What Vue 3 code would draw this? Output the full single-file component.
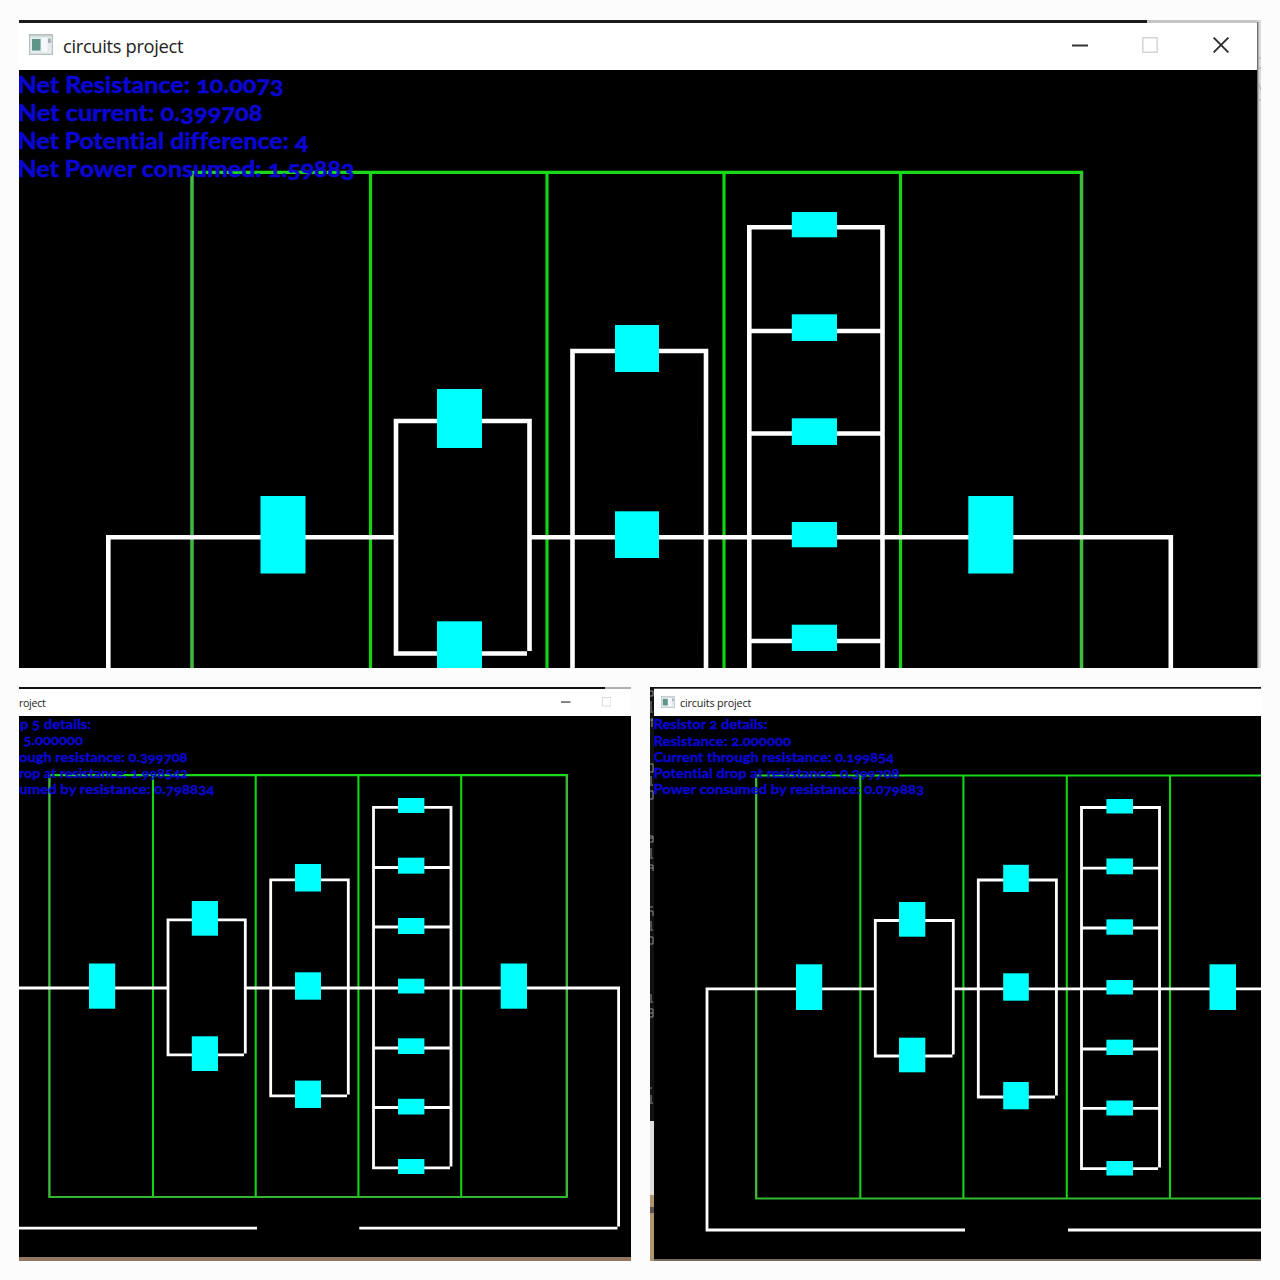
<script setup>
const boxRect = (x1, x2, spans) => spans.map(([a, b]) => ({ x: x1, y: a, w: x2 - x1, h: b - a }))

const tiles = [
  {
    id: 'overview', cls: 'wide', view: '19 70 1242 598', w: 1242, h: 598,
    icon: true, title: 'circuits project', buttons: true, close: true,
    green: 3.2, white: 4.6,
    frame: { x1: 192, x2: 1081.5, y1: 172.3, y2: 700 },
    dividers: [370.5, 547, 724, 900.5],
    wires: 'M396 537.3H108.3V700 M529.5 537.3H1170.8V700 M527 653.5H396V421H529.5V651 M572.5 700V351H706V700 M749.3 700V227.3H882.5V700 M749 331H882 M749 433.5H882 M749 641H882',
    resistors: [
      ...boxRect(260.5, 305.5, [[496, 573.5]]),
      ...boxRect(437, 482, [[389, 448], [621.3, 700]]),
      ...boxRect(615, 659, [[325, 372], [511.3, 558]]),
      ...boxRect(791.8, 837, [[212, 237.3], [314.3, 341], [418.3, 445], [522, 547.3], [624.7, 651]]),
      ...boxRect(968.3, 1013.3, [[496, 573.5]])
    ],
    size: 23,
    lines: [
      { t: 'Net Resistance: 10.0073', x: 17.5, y: 93, w: 266 },
      { t: 'Net current: 0.399708', x: 17.5, y: 121, w: 245 },
      { t: 'Net Potential difference: 4', x: 17.5, y: 149, w: 291 },
      { t: 'Net Power consumed: 1.59883', x: 17.5, y: 177, w: 337 }
    ]
  },
  {
    id: 'group', cls: 'small left', view: '19 716 612 541', w: 612, h: 541,
    icon: false, title: 'roject', buttons: true, close: false,
    green: 2.1, white: 2.8,
    frame: { x1: 49.4, x2: 566.8, y1: 775.1, y2: 1197 },
    dividers: [153, 255.7, 358.4, 461.2],
    wires: 'M10 988H168 M245.5 988H618.6V1226.5 M10 1228.2H257 M359.3 1228.2H617.5 M244 1054.8H168V919.8H245.3V1053.5 M347 1095.8H270.7V879.8H348.3V1094.5 M450 1167.8H373.5V807.3H451V1166.5 M373 867.5H451 M373 927H451 M373 988H451 M373 1048H451 M373 1107.5H451',
    resistors: [
      ...boxRect(89, 115.2, [[963.5, 1008.7]]),
      ...boxRect(191.8, 218, [[901, 935.7], [1036.3, 1071]]),
      ...boxRect(295, 321, [[864, 891.5], [972.3, 999.7], [1080.6, 1108]]),
      ...boxRect(398, 424.4, [[798, 813], [857.7, 873.7], [918, 934], [978.7, 993.5], [1038.3, 1054], [1098.8, 1114.5], [1159, 1174]]),
      ...boxRect(500.7, 527, [[963.5, 1008.7]])
    ],
    size: 12.8,
    lines: [
      { t: 'p 5 details:', x: 20, y: 729, w: 71 },
      { t: '5.000000', x: 23.5, y: 745.3, w: 59.5 },
      { t: 'ough resistance: 0.399708', x: 19, y: 761.5, w: 168.5 },
      { t: 'rop at resistance: 1.998542', x: 19, y: 778, w: 169 },
      { t: 'umed by resistance: 0.798834', x: 19.3, y: 794.2, w: 195 }
    ]
  },
  {
    id: 'resistor', cls: 'small right', view: '650 716 611 543', w: 611, h: 543,
    icon: true, title: 'circuits project', buttons: false, close: false, gutter: true,
    green: 2.1, white: 2.8,
    frame: { x1: 756.2, x2: 1300, y1: 775.5, y2: 1198.5 },
    dividers: [860.3, 963.4, 1066.8, 1170],
    wires: 'M875 988.8H707V1230H965 M953.5 988.8H1270 M1068 1230H1270 M952.5 1056H875.3V920.5H953.3V1054.5 M1055 1097H978.3V880H1056.4V1095.5 M1158 1168.7H1081.5V807.5H1159.5V1167.5 M1081 868.2H1159.5 M1081 928H1159.5 M1081 1049H1159.5 M1081 1108.3H1159.5',
    resistors: [
      ...boxRect(796, 822.2, [[964.3, 1010]]),
      ...boxRect(899, 925.3, [[902, 936.7], [1037.7, 1072.3]]),
      ...boxRect(1003.2, 1028.8, [[864.8, 892], [973.3, 1000.7], [1082, 1109.3]]),
      ...boxRect(1106.4, 1133, [[799, 813.5], [858.5, 874.3], [919.3, 934.7], [980, 994.5], [1039.7, 1055], [1100.5, 1115.5], [1161, 1175.5]]),
      ...boxRect(1209.5, 1236, [[964.3, 1010]])
    ],
    size: 12.8,
    lines: [
      { t: 'Resistor 2 details:', x: 653.5, y: 729, w: 114 },
      { t: 'Resistance: 2.000000', x: 653.5, y: 745.5, w: 137.5 },
      { t: 'Current through resistance: 0.199854', x: 653.5, y: 761.7, w: 240.5 },
      { t: 'Potential drop at resistance: 0.399708', x: 653.5, y: 778, w: 246 },
      { t: 'Power consumed by resistance: 0.079883', x: 653.5, y: 794.3, w: 270.5 }
    ]
  }
]
</script>

<template>
  <main class="board">
    <section v-for="t in tiles" :key="t.id" class="tile" :class="t.cls">
      <div class="topline"></div>
      <header class="bar">
        <svg v-if="t.icon" class="app-icon" viewBox="0 0 24 21">
          <rect x=".6" y=".6" width="22.8" height="19.8" fill="#e4ebec" stroke="#b4bebf" stroke-width="1.2" />
          <path d="M1 1.8H23" stroke="#c6cecf" stroke-width="1.5" />
          <rect x="3" y="5" width="8.5" height="11.5" fill="#5c9488" />
          <rect x="12.5" y="4" width="6" height="14" fill="#f5f8fa" />
          <rect x="19" y="4.5" width="2.8" height="4.5" fill="#a3afb0" />
        </svg>
        <span class="title">{{ t.title }}</span>
        <div v-if="t.buttons" class="buttons">
          <svg viewBox="0 0 16 16"><path d="M0 8.5H16" stroke="#333" stroke-width="2" /></svg>
          <svg viewBox="0 0 16 16"><rect x=".8" y=".8" width="14.4" height="14.4" fill="none" stroke="#d2d2d2" stroke-width="1.4" /></svg>
          <svg v-if="t.close" viewBox="0 0 16 16"><path d="M.6 .6L15.4 15.4M15.4 .6L.6 15.4" stroke="#2c2c2c" stroke-width="1.9" /></svg>
        </div>
      </header>
      <svg class="canvas" :viewBox="t.view" :width="t.w" :height="t.h">
        <g fill="none" :stroke-width="t.green">
          <path v-for="d in t.dividers" :key="d" :d="`M${d} ${t.frame.y1}V${t.frame.y2}`" stroke="#12d412" />
          <path :d="`M${t.frame.x1} ${t.frame.y1}V${t.frame.y2}M${t.frame.x2} ${t.frame.y1}V${t.frame.y2}`" stroke="#3fbb3f" :stroke-width="t.green * 1.1" />
          <path :d="`M${t.frame.x1 - t.green / 2} ${t.frame.y1}H${t.frame.x2 + t.green / 2}`" stroke="#1ad91a" />
          <path :d="`M${t.frame.x1 - t.green / 2} ${t.frame.y2}H${t.frame.x2 + t.green / 2}`" stroke="#32b932" />
        </g>
        <path :d="t.wires" fill="none" stroke="#fff" :stroke-width="t.white" />
        <rect v-for="(r, i) in t.resistors" :key="i" :x="r.x" :y="r.y" :width="r.w" :height="r.h" fill="#00ffff" />
        <g class="readout" :font-size="t.size" :stroke-width="t.size * 0.025">
          <text v-for="l in t.lines" :key="l.t" :x="l.x" :y="l.y" :textLength="l.w" lengthAdjust="spacingAndGlyphs">{{ l.t }}</text>
        </g>
      </svg>
      <svg v-if="t.gutter" class="gutter" viewBox="650 687 4 574" width="4" height="574">
        <rect x="649" y="687" width="5" height="434" fill="#111" />
        <path d="M650 691H653V696H650M651 701V711M650 712H653M650 720H653M652 718V727M650 764H653V772H650M651 776V784M650 785H653M650 791H653V799H650M650 836H653V842H650M650 838H653M651 848V857M650 858H653M650 865H653V871M650 868H653M650 907H653M650 911H653V916M651 921V929M650 930H653M650 937H653V944H650M651 994V1001M650 1002H653M650 1009H653V1017H650M650 1013H653M650 1088H652M651 1095V1102M650 1103H653" fill="none" stroke="#8b9298" stroke-width="1" />
        <rect x="649" y="1121" width="5" height="74" fill="#dedede" />
        <rect x="649" y="1195" width="5" height="66" fill="#ae9470" />
        <rect x="649" y="1207" width="5" height="6" fill="#5f5050" />
      </svg>
      <svg v-if="t.close" class="edge" viewBox="0 0 4 649" width="4" height="649">
        <rect width="4" height="649" fill="#d9d9d9" />
        <rect y="2" width="1.4" height="647" fill="#707070" />
        <path d="M1.5 63L4 70M1 38H4M1 48H4M1 80H4" stroke="#aaa" stroke-width="1" />
      </svg>
    </section>
  </main>
</template>

<style>
body { margin: 0; background: #fcfcfc; }
</style>

<style scoped>
.board {
  box-sizing: border-box;
  width: 1280px;
  height: 1280px;
  padding: 19px;
  background: #fcfcfc;
  display: grid;
  grid-template-columns: 612px 611px;
  grid-template-rows: 649px 574px;
  gap: 19px;
  overflow: hidden;
}
.tile {
  position: relative;
  overflow: hidden;
  display: flex;
  flex-direction: column;
  background: #000;
}
.wide { grid-column: 1 / 3; }
.left { background: #927660; }
.right { background: #77695a; }
.topline { flex: none; height: 2px; background: linear-gradient(#111 1px, #555 1px); }
.wide .topline {
  height: 4px;
  background: linear-gradient(#fcfcfc 0 1px, transparent 1px), linear-gradient(90deg, #1b1b1b 1128px, #c4c4c4 1128px);
}
.left .topline { background: linear-gradient(90deg, #111 586px, #b0b0b0 586px); }
.bar {
  flex: none;
  box-sizing: border-box;
  height: 47px;
  background: #fff;
  display: flex;
  align-items: center;
  padding-left: 10px;
  padding-right: 32.5px;
}
.small .bar { height: 27px; padding-left: 12px; padding-right: 20px; }
.small.left .bar { padding-left: 0; }
.app-icon { width: 24px; height: 21px; margin: 0 10px 4px 0; flex: none; }
.small .app-icon { width: 14px; height: 12px; margin: 0 5px 2px 0; }
.title {
  font-family: "Open Sans", "Noto Sans", sans-serif;
  font-size: 18.3px;
  letter-spacing: -0.32px;
  line-height: 24px;
  margin-bottom: 2px;
  color: #222;
  white-space: nowrap;
}
.small .title { font-size: 10.8px; letter-spacing: -0.18px; line-height: 14px; margin-bottom: 0; }
.small.right .bar { margin-left: 4px; padding-left: 7px; }
.small.left .title { font-size: 10.6px; letter-spacing: -0.3px; }
.buttons { margin-left: auto; display: flex; gap: 54.5px; }
.buttons svg { width: 16px; height: 16px; margin-bottom: 4px; flex: none; }
.small .buttons { gap: 31px; }
.small .buttons svg { width: 9.5px; height: 9.5px; margin-bottom: 1px; }
.canvas { display: block; flex: none; background: #000; }
.readout {
  font-family: Lato, "Open Sans", sans-serif;
  font-weight: 700;
  font-variant-numeric: oldstyle-nums;
  font-variant-ligatures: none;
  fill: #0b06d2;
  stroke: #0b06d2;
}
.gutter { position: absolute; left: 0; top: 0; }
.edge { position: absolute; right: 0; top: 1px; }
</style>
